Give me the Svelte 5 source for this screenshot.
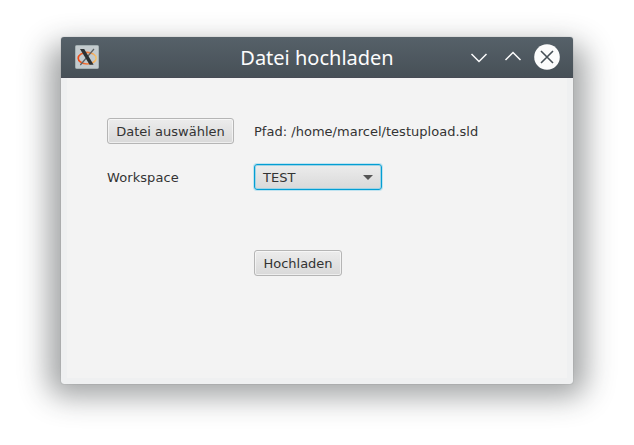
<script>
  let path = '/home/marcel/testupload.sld';
  let workspace = 'TEST';
</script>

<main>
  <div class="shadow"></div>
  <section class="window">
    <header>
      <svg class="logo" width="24" height="24" viewBox="0 0 24 24">
        <defs>
          <linearGradient id="ring">
            <stop offset="0" stop-color="#ef4b17" />
            <stop offset=".55" stop-color="#ef7b3c" />
            <stop offset="1" stop-color="#f5c56e" />
          </linearGradient>
        </defs>
        <rect x=".5" y=".5" width="23" height="23" rx="1" fill="#c4cbce" stroke="#a4b0b2" />
        <ellipse cx="12.2" cy="13.2" rx="9" ry="5.8" fill="none" stroke="url(#ring)" stroke-width="1.7" />
        <path d="M19 4 L5.3 20" stroke="#5c6062" stroke-width="1.2" />
        <path d="M5 4 H9.2 L18.6 19.8 H14.6 Z" fill="#2c3032" />
      </svg>
      <h1>Datei hochladen</h1>
      <div class="controls">
        <svg width="18" height="26" viewBox="0 0 18 26"><path d="M1.5 10 L9 17.5 L16.5 10" /></svg>
        <svg width="18" height="26" viewBox="0 0 18 26"><path d="M1.5 16 L9 8.5 L16.5 16" /></svg>
        <svg width="26" height="26" viewBox="0 0 26 26">
          <circle cx="13" cy="13" r="12.8" fill="#fcfcfc" />
          <path class="cross" d="M7 7 L19 19 M19 7 L7 19" />
        </svg>
      </div>
    </header>
    <div class="content">
      <div class="row">
        <div class="label"><button>Datei auswählen</button></div>
        <span>Pfad: {path}</span>
      </div>
      <div class="row">
        <div class="label wide">Workspace</div>
        <button class="combo">{workspace}<i></i></button>
      </div>
      <div class="row submit">
        <div class="label"></div>
        <button>Hochladen</button>
      </div>
    </div>
  </section>
</main>

<style>
  :global(body) { background: #fff; }
  main {
    display: grid;
    box-sizing: border-box;
    width: 634px;
    height: 445px;
    padding: 37px 61px 61px;
    overflow: hidden;
    font: 13px/28px "DejaVu Sans", sans-serif;
    color: #333;
  }
  .shadow, .window { grid-area: 1 / 1; }
  .shadow {
    margin-top: 20px;
    border-radius: 6px;
    box-shadow: 0 0 29px 13px rgba(35, 40, 44, .42);
  }
  .window {
    display: flex;
    flex-direction: column;
    width: 512px;
    height: 347px;
    border-radius: 3px;
    overflow: hidden;
    background: #eff0f1;
    box-shadow: 0 0 1px rgba(40, 45, 50, .5);
  }
  header {
    display: flex;
    align-items: center;
    box-sizing: border-box;
    height: 41px;
    flex: none;
    padding: 0 13px 0 14px;
    background: linear-gradient(#566169, #475057 97%, #474b55 98%);
  }
  .logo { flex: none; margin-bottom: 1px; }
  h1 {
    flex: 1;
    margin: 0 0 0 65px;
    text-align: center;
    font: 20px/28px "Noto Sans", sans-serif;
    color: #fcfcfc;
    white-space: nowrap;
  }
  .controls { display: flex; gap: 16px; margin-bottom: 1px; }
  .controls svg:last-child { margin-left: -4px; }
  .controls path { fill: none; stroke: #fcfcfc; stroke-width: 1.5; }
  .controls .cross { stroke: #475057; stroke-width: 1.6; }
  .content {
    flex: 1;
    margin: 0 6px 6px;
    padding: 40px;
    background: #f3f3f3;
  }
  .row { display: flex; height: 26px; margin-bottom: 20px; }
  .row > span { letter-spacing: .02px; }
  .label { width: 147px; flex: none; }
  .wide { letter-spacing: .08px; }
  .submit { margin-top: 60px; }
  button {
    display: block;
    box-sizing: border-box;
    height: 26px;
    margin: 0;
    padding: 1px 8px 0;
    border: 1px solid #b5b5b5;
    border-radius: 3px;
    background: linear-gradient(#ececec, #d9d9d9);
    box-shadow: inset 0 0 0 1px rgba(255, 255, 255, .55);
    color: #333;
    font: inherit;
    line-height: 24px;
    white-space: nowrap;
  }
  .label button { width: 127px; }
  .submit button { width: 88px; }
  .combo {
    display: flex;
    align-items: center;
    justify-content: space-between;
    width: 128px;
    border-color: #039ed3;
    box-shadow: 0 0 0 1px #bfe3f0, inset 0 0 0 1px #9fd3e5;
  }
  i {
    border: solid transparent;
    border-width: 5px 5px 0;
    border-top-color: #555;
  }
</style>
